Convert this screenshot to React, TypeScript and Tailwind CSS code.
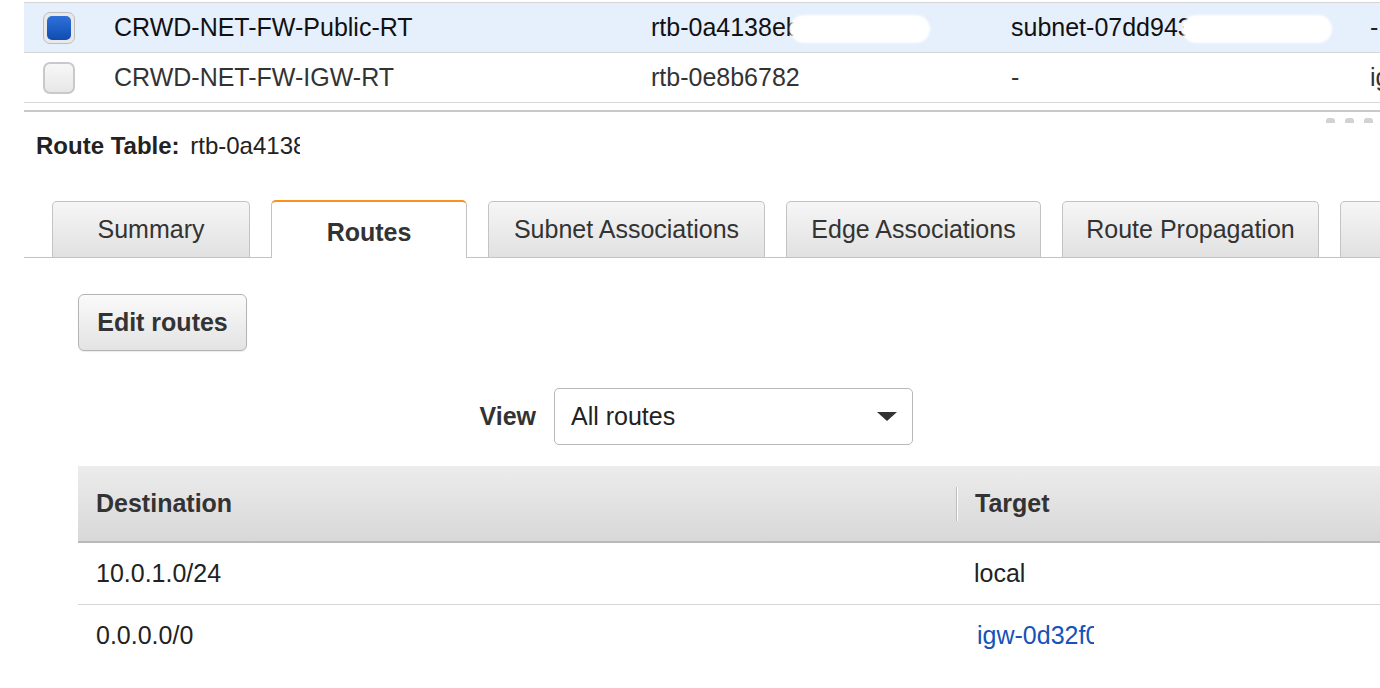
const Checkbox = ({ checked }: { checked?: boolean }) => {
  if (checked) {
    return (
      <div className="w-[32px] h-[32px] rounded-[7px] border border-[#bdbdbd] bg-[#e9e9e9] p-[3px]">
        <div className="w-full h-full rounded-[5px] bg-gradient-to-b from-[#2f70d8] to-[#0e4cb2]" />
      </div>
    );
  }
  return (
    <div className="w-[32px] h-[32px] rounded-[7px] border-2 border-[#c9c9c9] bg-gradient-to-b from-[#f7f7f7] to-[#e7e7e7]" />
  );
};

const Blob = ({ w }: { w: string }) => (
  <span className={`inline-block ${w} h-[28px] -ml-[10px] rounded-[14px] bg-white align-middle blur-[1px]`} />
);

const tabs = [
  { label: "Summary", w: "w-[198px]" },
  { label: "Routes", w: "w-[196px]", active: true },
  { label: "Subnet Associations", w: "w-[277px]" },
  { label: "Edge Associations", w: "w-[255px]" },
  { label: "Route Propagation", w: "w-[257px]" },
  { label: "", w: "w-[80px]" },
];

const App = () => {
  return (
    <div className="w-[1380px] h-[688px] overflow-hidden bg-white font-['Liberation_Sans',Arial,sans-serif] text-[25px] text-[#222]">
      {/* route table list */}
      <div className="pt-[2px] pl-[24px]">
        <div className="border-t border-[#d6d6d6]">
          <div className="flex h-[50px] items-center bg-[#e6effc] border-b border-[#d6d6d6] whitespace-nowrap">
            <div className="w-[90px] pl-[19px]">
              <Checkbox checked />
            </div>
            <div className="w-[537px] text-[#111]">CRWD-NET-FW-Public-RT</div>
            <div className="w-[360px] text-[#111]">
              rtb-0a4138eb
              <Blob w="w-[140px]" />
            </div>
            <div className="w-[359px] text-[#111]">
              subnet-07dd943
              <Blob w="w-[150px]" />
            </div>
            <div className="flex-1 overflow-hidden">-</div>
          </div>
          <div className="flex h-[50px] items-center border-b border-[#d6d6d6] whitespace-nowrap text-[#333]">
            <div className="w-[90px] pl-[19px]">
              <Checkbox />
            </div>
            <div className="w-[537px]">CRWD-NET-FW-IGW-RT</div>
            <div className="w-[360px]">rtb-0e8b6782</div>
            <div className="w-[359px]">-</div>
            <div className="flex-1 overflow-hidden">igw</div>
          </div>
        </div>
        <div className="mt-[7px] h-[2px] bg-[#c9c9c9]" />
      </div>

      {/* panel handles */}
      <div className="flex h-[14px] justify-end gap-[10px] pr-[7px] pt-[6px]">
        <span className="w-[9px] h-[5px] rounded-t-[3px] bg-[#d2d2d2]" />
        <span className="w-[9px] h-[5px] rounded-t-[3px] bg-[#d2d2d2]" />
        <span className="w-[9px] h-[5px] rounded-t-[3px] bg-[#d2d2d2]" />
      </div>

      <div className="h-[40px] leading-[40px] pl-[36px] text-[24px] text-[#222] whitespace-nowrap">
        <span className="font-bold">Route Table:</span>{" "}
        <span className="inline-block w-[110px] overflow-hidden align-bottom ml-[4px]">rtb-0a4138</span>
      </div>

      {/* tabs */}
      <div className="mt-[34px] ml-[24px] flex items-end gap-[21px] pl-[28px] border-b border-[#c3c3c3]">
        {tabs.map((t, i) =>
          t.active ? (
            <div
              key={i}
              className={`${t.w} shrink-0 h-[58px] -mb-px flex items-center justify-center pt-[6px] rounded-t-[5px] border-t-2 border-t-[#f7931e] border-x border-x-[#c3c3c3] bg-white font-bold text-[#333]`}
            >
              {t.label}
            </div>
          ) : (
            <div
              key={i}
              className={`${t.w} shrink-0 h-[56px] flex items-center justify-center rounded-t-[5px] border border-b-0 border-[#c3c3c3] bg-gradient-to-b from-[#f6f6f6] to-[#e1e1e1] text-[#333] whitespace-nowrap`}
            >
              {t.label}
            </div>
          )
        )}
      </div>

      {/* routes panel */}
      <div className="pl-[78px]">
        <button className="mt-[36px] w-[169px] h-[57px] rounded-[6px] border border-[#b4b4b4] bg-gradient-to-b from-[#fafafa] to-[#e3e3e3] font-bold text-[#333] shadow-[0_1px_1px_rgba(0,0,0,0.08)]">
          Edit routes
        </button>

        <div className="mt-[37px] flex items-center">
          <div className="w-[476px] pr-[18px] text-right font-bold text-[#333]">View</div>
          <div className="w-[359px] h-[57px] flex items-center justify-between rounded-[5px] border border-[#b8b8b8] pl-[16px] pr-[15px] text-[#222]">
            <span>All routes</span>
            <svg width="20" height="10" viewBox="0 0 20 10">
              <polygon points="0,0 20,0 10,9" fill="#333" />
            </svg>
          </div>
        </div>

        <div className="mt-[21px]">
          <div className="flex h-[77px] items-center bg-gradient-to-b from-[#ececec] to-[#d8d8d8] border-b-2 border-[#b9b9b9] font-bold text-[#333]">
            <div className="w-[878px] pl-[18px]">Destination</div>
            <div className="flex items-center">
              <div className="h-[34px] w-[2px] border-l border-[#bdbdbd] bg-white" />
              <div className="pl-[17px]">Target</div>
            </div>
          </div>
          <div className="flex h-[62px] items-center border-b border-[#d6d6d6]">
            <div className="w-[878px] pl-[18px]">10.0.1.0/24</div>
            <div className="pl-[18px]">local</div>
          </div>
          <div className="flex h-[62px] items-center">
            <div className="w-[878px] pl-[18px]">0.0.0.0/0</div>
            <div className="pl-[21px]">
              <a className="inline-block w-[117px] overflow-hidden whitespace-nowrap align-bottom text-[#1652b8]">
                igw-0d32f0
              </a>
            </div>
          </div>
        </div>
      </div>
    </div>
  );
};

export default App;
